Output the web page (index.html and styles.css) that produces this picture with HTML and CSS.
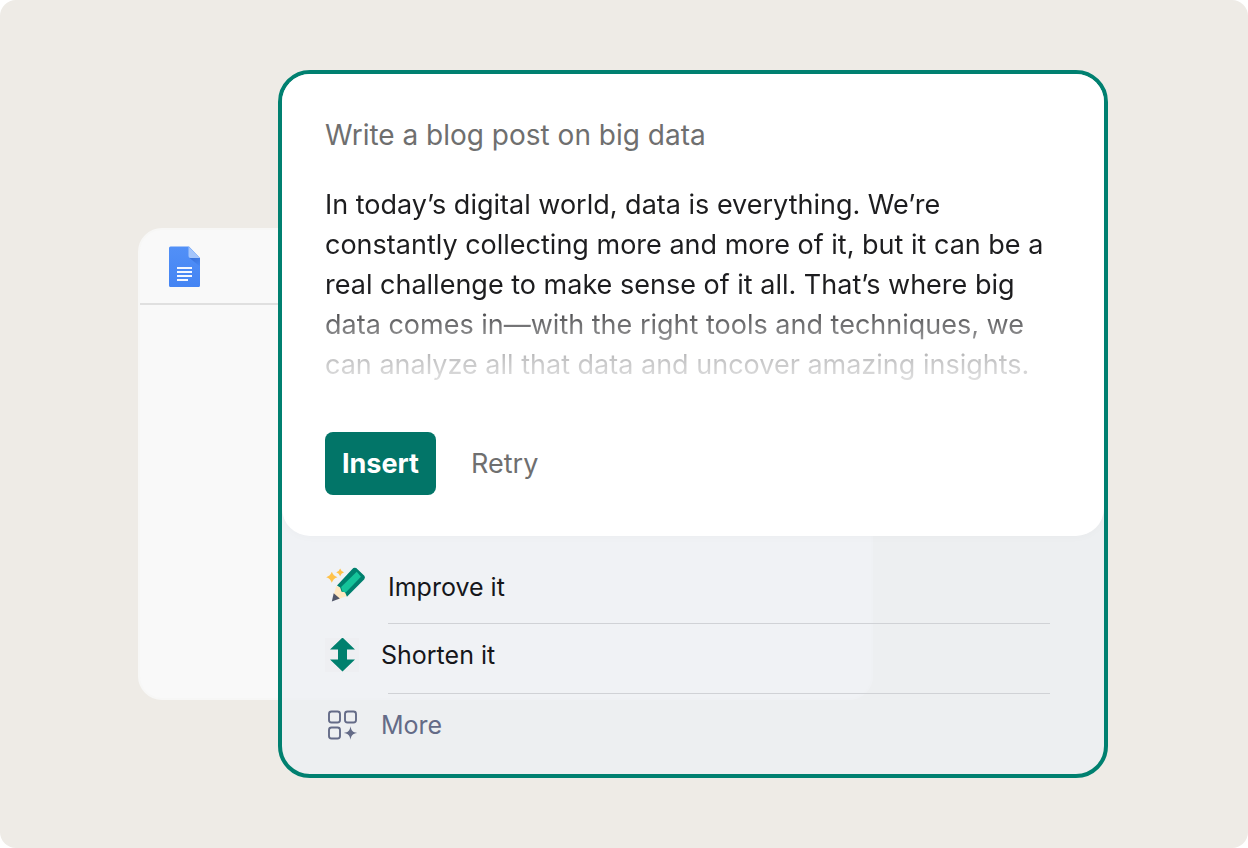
FILE: index.html
```html
<!DOCTYPE html>
<html lang="en">
<head>
<meta charset="utf-8">
<meta name="viewport" content="width=device-width, initial-scale=1">
<title>Writing assistant</title>
<link rel="stylesheet" href="styles.css">
</head>
<body>
<main class="stage">
  <div class="document">
    <header class="document-bar">
      <svg class="doc-icon" viewBox="0 0 32 42" aria-hidden="true">
        <defs>
          <linearGradient id="sheet" x1="0" y1="0" x2="0" y2="1"><stop offset="0" stop-color="#5290f7"/><stop offset="1" stop-color="#4484f3"/></linearGradient>
          <linearGradient id="fold" x1="0" y1="0" x2="1" y2="1"><stop offset="0" stop-color="#376fd8"/><stop offset="1" stop-color="#4889f5"/></linearGradient>
        </defs>
        <path fill="url(#sheet)" d="M3 0.500H20L31 12V39.500a1.500 1.500 0 0 1-1.500 1.500H1.500A1.500 1.500 0 0 1 0 39.500V2A1.500 1.500 0 0 1 1.500 .500Z"/>
        <path fill="url(#fold)" d="M20.500 12H31V20.500Z"/>
        <path fill="#a4c5fb" d="M19.500.5L31 12H21.500a2 2 0 0 1-2-2Z"/>
        <path fill="#f3f7ff" d="M8 21h15v2H8zM8 25h15v2H8zM8 29h15v2H8zM8 33h11v2H8z"/>
      </svg>
    </header>
  </div>

  <section class="card">
    <div class="result">
      <h1 class="prompt">Write a blog post on big data</h1>
      <p class="answer">In today’s digital world, data is everything. We’re constantly collecting more and more of it, but it can be a real challenge to make sense of it all. That’s where big data comes in—with the right tools and techniques, we can analyze all that data and uncover amazing insights.</p>
      <div class="actions">
        <button class="button button-primary" type="button">Insert</button>
        <button class="button button-plain" type="button">Retry</button>
      </div>
    </div>
    <div class="options">
      <button class="option option-improve" type="button">
        <svg class="option-icon icon-pencil" viewBox="0 0 42 38" aria-hidden="true">
          <path fill="#ffc24a" d="M7 5.500Q8.300 9.700 12.800 11 8.300 12.300 7 16.800 5.700 12.300 1.200 11 5.700 9.700 7 5.500ZM15.500 2Q16.500 5 19.500 6 16.500 7 15.500 10 14.500 7 11.500 6 14.500 5 15.500 2Z"/>
          <path fill="#ffe8c0" d="M11.500 20l4 1.500 7 7.500-.5 1.500-10 3.500L9 29Z"/>
          <path fill="#515668" d="M8.900 27.500l6.300 5.300L7 36Z"/>
          <path fill="#00806e" d="M12.300 19.500L28 2.500q1.500-1.800 4-.8L40.300 9.500q1.300 1.500 0 3.500L22.500 31l-2-4.500-3.500-.5-1.500-4.500Z"/>
          <path fill="#15c39a" d="M16.500 21L32.500 5.500 36.800 10.500 21.500 26.500l-3.500-.7Z"/>
        </svg>
        <span>Improve it</span>
      </button>
      <hr class="divider">
      <button class="option option-shorten" type="button">
        <svg class="option-icon" viewBox="0 0 34 34" aria-hidden="true">
          <path fill="#eeeff2" d="M0 0h34v34H0z"/>
          <path fill="#00806e" d="M17.500-.5L30 11.500h-8v10H30L17.500 33.500 5 21.500h8v-10H5Z"/>
        </svg>
        <span>Shorten it</span>
      </button>
      <hr class="divider">
      <button class="option option-more" type="button">
        <svg class="option-icon" viewBox="0 0 34 34" aria-hidden="true">
          <g fill="none" stroke="#646b87" stroke-width="1.900">
            <rect x="4" y="3.500" width="11" height="11" rx="2.500"/>
            <rect x="20" y="3.500" width="11" height="11" rx="2.500"/>
            <rect x="4" y="19.500" width="11" height="11" rx="2.500"/>
          </g>
          <path fill="#646b87" d="M25.500 18.300c1 4.800 2 5.800 6.700 6.700-4.700.9-5.700 1.900-6.700 6.700-1-4.800-2-5.800-6.700-6.700 4.700-.9 5.700-1.900 6.700-6.700Z"/>
        </svg>
        <span>More</span>
      </button>
    </div>
  </section>
</main>
</body>
</html>
```
FILE: styles.css
```css
* { box-sizing: border-box; }

body {
  margin: 0;
  background: #fff;
  font-family: Inter, "Liberation Sans", sans-serif;
  color: #1d1d1f;
}

.stage {
  display: grid;
  align-content: center;
  min-height: 100vh;
  padding: 70px 140px 70px 138px;
  border-radius: 16px;
  background: #eeebe6;
}

/* The document and the card share one grid cell; the card lies on top. */
.document,
.card {
  grid-area: 1 / 1;
}

.document {
  margin: 158px 235px 78px 0;
  border: 2px solid #f7f7f6;
  border-radius: 24px;
  background: #f9f9f9;
}

.document-bar {
  padding: 16px 29px 15px;
  border-bottom: 2px solid #e0e0e0;
}

.doc-icon {
  display: block;
  width: 32px;
  height: 42px;
}

.card {
  display: flex;
  flex-direction: column;
  margin-left: 140px;
  border: 4px solid #008070;
  border-radius: 32px;
  background: rgb(237 239 244 / 78%);
  background-clip: padding-box;
  overflow: hidden;
}

.result {
  padding: 41px 43px;
  border-radius: 0 0 28px 28px;
  background: #fff;
  box-shadow: 0 2px 8px rgb(0 0 0 / 2%);
}

.prompt,
.answer {
  margin: 0;
  font-size: 28px;
  font-weight: 400;
  line-height: 40px;
}

.prompt { color: #6f6f6f; }

.answer {
  margin-top: 30px;
  background: linear-gradient(#1d1d1f 57%, #6d6d6f 69%, #c4c4c5 87%, #e6e6e6 100%);
  background-clip: text;
  color: transparent;
  font-size: 27px;
}

.actions {
  display: flex;
  gap: 35px;
  margin-top: 47px;
}

.button {
  padding: 0;
  border: 0;
  background: none;
  font: 400 27px/63px Inter, "Liberation Sans", sans-serif;
  cursor: pointer;
}

.button-primary {
  min-width: 111px;
  padding: 0 16px;
  border-radius: 8px;
  background: #027568;
  color: #fff;
  font-weight: 700;
}

.button-plain { color: #6f6f6f; }

.options {
  display: flex;
  flex-direction: column;
  padding: 17px 54px 19px 43px;
}

.option {
  display: flex;
  align-items: center;
  gap: 22px;
  height: 69px;
  padding: 0;
  border: 0;
  background: none;
  color: #16171b;
  font: 400 25px/32px Inter, "Liberation Sans", sans-serif;
  cursor: pointer;
}

.option-improve {
  height: 70px;
  padding-bottom: 2px;
}

.option-shorten { padding-bottom: 8px; }

.option-more {
  height: 61px;
  color: #646b87;
}

.option-icon {
  width: 34px;
  height: 34px;
}

.icon-pencil {
  width: 41px;
  height: 38px;
  margin-bottom: 4px;
}

.divider {
  width: calc(100% - 63px);
  margin: 0 0 0 63px;
  border: 0;
  border-top: 1px solid #d0d2d6;
}
```
